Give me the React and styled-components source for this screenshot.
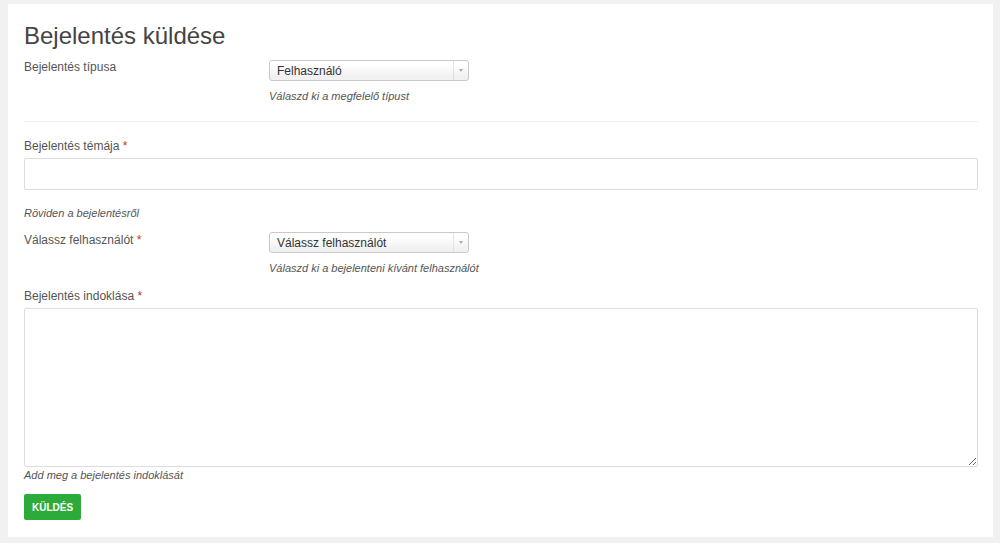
import React from "react";
import styled, { createGlobalStyle } from "styled-components";

const Global = createGlobalStyle`
  html, body { margin: 0; padding: 0; background: #f1f1f1; }
  body { font-family: "Liberation Sans", Arial, sans-serif; }
  * { box-sizing: border-box; }
`;

const Page = styled.div`
  padding: 4px 7px 6px 8px;
  height: 543px;
`;

const Panel = styled.div`
  background: #ffffff;
  padding: 17px 15px 16px 16px;
  height: 533px;
`;

const Title = styled.h1`
  margin: 0 0 9px;
  font-size: 24px;
  font-weight: 400;
  line-height: 30px;
  color: #444;
`;

const Row = styled.div`
  display: grid;
  grid-template-columns: 245px 200px;
  margin-top: ${({ mt }) => mt || 0}px;
  margin-bottom: ${({ mb }) => mb || 0}px;
`;

const Field = styled.div`
  white-space: nowrap;
`;

const Label = styled.div`
  font-size: 12px;
  color: #555;
  padding-top: ${({ pt }) => pt ?? 0}px;
  margin-top: ${({ mt }) => mt || 0}px;
`;

const Req = styled.span`
  color: #c9302c;
`;

const Help = styled.div`
  font-size: 11px;
  font-style: italic;
  color: #555;
  white-space: nowrap;
  margin-top: ${({ mt }) => mt || 0}px;
`;

const Select = styled.div`
  display: flex;
  align-items: center;
  height: 21px;
  border: 1px solid #c9c9c9;
  border-radius: 3px;
  background: linear-gradient(#ffffff 20%, #f1f1f1 80%);
  font-size: 12px;
  color: #333;
  padding-left: 7px;
`;

const SelectText = styled.span`
  flex: 1;
`;

const Arrow = styled.span`
  width: 15px;
  height: 100%;
  border-left: 1px solid #e0e0e0;
  display: flex;
  align-items: center;
  justify-content: center;
  &::after {
    content: "";
    border-left: 2px solid transparent;
    border-right: 2px solid transparent;
    border-top: 3px solid #aaa;
  }
`;

const Divider = styled.hr`
  border: 0;
  border-top: 1px solid #eee;
  margin: 0 0 17px;
`;

const Input = styled.div`
  height: 32px;
  border: 1px solid #ddd;
  border-radius: 2px;
  margin-top: 5px;
`;

const TextArea = styled.textarea`
  display: block;
  width: 100%;
  height: 159px;
  border: 1px solid #ddd;
  border-radius: 2px;
  margin: 5px 0 0;
  resize: vertical;
  font-family: inherit;
`;

const Button = styled.button`
  margin-top: 13px;
  width: 57px;
  height: 26px;
  border: 0;
  border-radius: 2px;
  background: #2cab3a;
  color: #fff;
  font-family: "Liberation Sans", Arial, sans-serif;
  font-size: 10px;
  font-weight: 700;
  padding: 0;
`;

export default function App() {
  return (
    <>
      <Global />
      <Page>
        <Panel>
          <Title>Bejelentés küldése</Title>
          <Row mb={19}>
            <Label pt={0}>Bejelentés típusa</Label>
            <Field>
              <Select>
                <SelectText>Felhasználó</SelectText>
                <Arrow />
              </Select>
              <Help mt={9}>Válaszd ki a megfelelő típust</Help>
            </Field>
          </Row>
          <Divider />
          <Label>
            Bejelentés témája <Req>*</Req>
          </Label>
          <Input />
          <Help mt={17}>Röviden a bejelentésről</Help>
          <Row mt={13}>
            <Label pt={1}>
              Válassz felhasználót <Req>*</Req>
            </Label>
            <Field>
              <Select>
                <SelectText>Válassz felhasználót</SelectText>
                <Arrow />
              </Select>
              <Help mt={9}>Válaszd ki a bejelenteni kívánt felhasználót</Help>
            </Field>
          </Row>
          <Label mt={15}>
            Bejelentés indoklása <Req>*</Req>
          </Label>
          <TextArea />
          <Help mt={2}>Add meg a bejelentés indoklását</Help>
          <Button>KÜLDÉS</Button>
        </Panel>
      </Page>
    </>
  );
}
